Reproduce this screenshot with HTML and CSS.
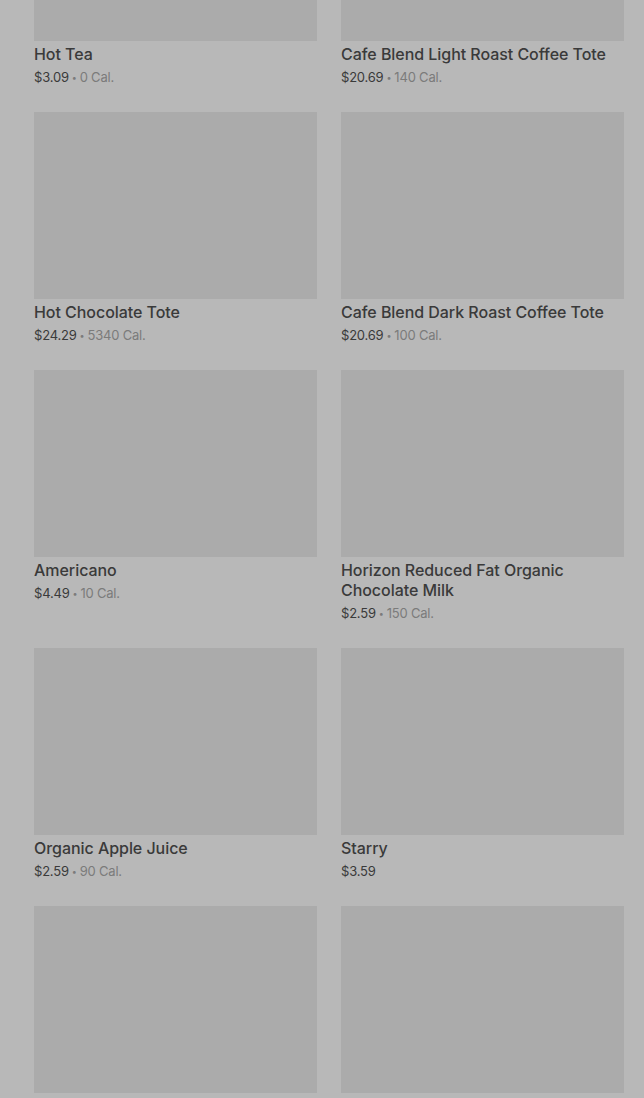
FILE: index.html
```html
<!DOCTYPE html>
<html>
<head>
<meta charset="utf-8">
<link rel="stylesheet" href="styles.css">
</head>
<body>
<div class="menu">
  <div class="card"><div class="img"></div><div class="title">Hot Tea</div><div class="meta"><span class="price">$3.09</span><span class="dot">•</span><span class="cal">0 Cal.</span></div></div>
  <div class="card"><div class="img"></div><div class="title">Cafe Blend Light Roast Coffee Tote</div><div class="meta"><span class="price">$20.69</span><span class="dot">•</span><span class="cal">140 Cal.</span></div></div>
  <div class="card"><div class="img"></div><div class="title">Hot Chocolate Tote</div><div class="meta"><span class="price">$24.29</span><span class="dot">•</span><span class="cal">5340 Cal.</span></div></div>
  <div class="card"><div class="img"></div><div class="title">Cafe Blend Dark Roast Coffee Tote</div><div class="meta"><span class="price">$20.69</span><span class="dot">•</span><span class="cal">100 Cal.</span></div></div>
  <div class="card"><div class="img"></div><div class="title">Americano</div><div class="meta"><span class="price">$4.49</span><span class="dot">•</span><span class="cal">10 Cal.</span></div></div>
  <div class="card"><div class="img"></div><div class="title">Horizon Reduced Fat Organic Chocolate Milk</div><div class="meta"><span class="price">$2.59</span><span class="dot">•</span><span class="cal">150 Cal.</span></div></div>
  <div class="card"><div class="img"></div><div class="title">Organic Apple Juice</div><div class="meta"><span class="price">$2.59</span><span class="dot">•</span><span class="cal">90 Cal.</span></div></div>
  <div class="card"><div class="img"></div><div class="title">Starry</div><div class="meta"><span class="price">$3.59</span></div></div>
  <div class="card"><div class="img"></div></div>
  <div class="card"><div class="img"></div></div>
</div>
</body>
</html>
```
FILE: styles.css
```css
html, body {
  margin: 0;
  padding: 0;
  background: #b8b8b8;
  overflow: hidden;
  height: 1098px;
}
body {
  font-family: Inter, "Noto Sans", sans-serif;
}
.menu {
  display: grid;
  grid-template-columns: 283px 283px;
  column-gap: 24px;
  row-gap: 24px;
  padding-left: 34px;
  margin-top: -146px;
  align-items: start;
}
.card {
  padding-bottom: 1px;
}
.img {
  height: 187px;
  background: #ababab;
}
.title {
  margin-top: 3px;
  font-size: 16px;
  line-height: 20px;
  font-weight: 500;
  letter-spacing: -0.05px;
  color: #3a3a3a;
}
.meta {
  margin-top: 3px;
  height: 20px;
  font-size: 13px;
  line-height: 20px;
  letter-spacing: -0.2px;
  white-space: nowrap;
}
.price { color: #3a3a3a; }
.dot {
  color: #7b7b7b;
  font-size: 9px;
  line-height: 0;
  margin: 0 3px;
  position: relative;
  top: -1px;
}
.cal { color: #7b7b7b; }
```
